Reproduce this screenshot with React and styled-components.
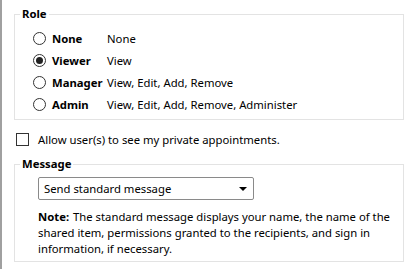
import React, { useState } from 'react';
import styled, { createGlobalStyle } from 'styled-components';

const GlobalStyle = createGlobalStyle`
  html, body {
    margin: 0;
    padding: 0;
    background: #fff;
  }
  body {
    font-family: 'Noto Sans', 'Open Sans', sans-serif;
    font-size: 11.3px;
    color: #000;
  }
`;

const Page = styled.div`
  width: 405px;
  height: 269px;
  box-sizing: border-box;
  border-left: 2px solid #a0a0a0;
  padding: 7px 1px 0 12px;
  overflow: hidden;
`;

const Group = styled.fieldset`
  margin: 0;
  border: 1px solid #e3e3e3;
  padding: 0;
  min-width: 0;
`;

const Legend = styled.legend`
  font-weight: 700;
  padding: 0 2px;
  margin-left: 5px;
  line-height: 14px;
`;

const GroupBody = styled.div`
  padding: ${(p) => p.$pad};
`;

const RoleTable = styled.div`
  display: grid;
  grid-template-columns: 74px 1fr;
  row-gap: 6px;
`;

const RoleRow = styled.label`
  display: contents;
  cursor: default;
`;

const RoleName = styled.span`
  display: flex;
  align-items: center;
  gap: 6px;
  font-weight: 700;
  height: 16px;
  white-space: nowrap;
`;

const RoleRights = styled.span`
  display: flex;
  align-items: center;
  height: 16px;
`;

const Radio = styled.span`
  width: 13px;
  height: 13px;
  box-sizing: border-box;
  border: 1px solid #333;
  border-radius: 50%;
  background: #fff;
  display: inline-flex;
  align-items: center;
  justify-content: center;
  flex: none;
  &::after {
    content: '';
    width: 7px;
    height: 7px;
    border-radius: 50%;
    background: #222;
    display: ${(p) => (p.$checked ? 'block' : 'none')};
  }
`;

const CheckRow = styled.label`
  display: flex;
  align-items: center;
  gap: 9px;
  margin: 11px 0 10px 2px;
  height: 16px;
`;

const Box = styled.span`
  width: 13px;
  height: 13px;
  box-sizing: border-box;
  border: 1px solid #333;
  background: #fff;
  flex: none;
`;

const Select = styled.div`
  width: 216px;
  height: 23px;
  box-sizing: border-box;
  border: 1px solid #8a8a8a;
  border-radius: 2px;
  display: flex;
  align-items: center;
  justify-content: space-between;
  padding: 0 6px 0 5px;
`;

const Caret = styled.span`
  width: 0;
  height: 0;
  border-left: 4px solid transparent;
  border-right: 4px solid transparent;
  border-top: 4px solid #000;
`;

const Note = styled.p`
  margin: 9px 0 0;
  line-height: 16px;
  b {
    font-weight: 700;
    margin-right: 1px;
  }
`;

const roles = [
  { name: 'None', rights: 'None' },
  { name: 'Viewer', rights: 'View' },
  { name: 'Manager', rights: 'View, Edit, Add, Remove' },
  { name: 'Admin', rights: 'View, Edit, Add, Remove, Administer' },
];

export default function App() {
  const [role, setRole] = useState('Viewer');

  return (
    <>
      <GlobalStyle />
      <Page>
        <Group>
          <Legend>Role</Legend>
          <GroupBody $pad="9px 8px 7px 18px">
            <RoleTable>
              {roles.map((r) => (
                <RoleRow key={r.name} onClick={() => setRole(r.name)}>
                  <RoleName>
                    <Radio $checked={role === r.name} />
                    {r.name}
                  </RoleName>
                  <RoleRights>{r.rights}</RoleRights>
                </RoleRow>
              ))}
            </RoleTable>
          </GroupBody>
        </Group>
        <CheckRow>
          <Box />
          Allow user(s) to see my private appointments.
        </CheckRow>
        <Group>
          <Legend>Message</Legend>
          <GroupBody $pad="6px 12px 4px 23px">
            <Select>
              Send standard message
              <Caret />
            </Select>
            <Note>
              <b>Note:</b> The standard message displays your name, the name
              of the shared item, permissions granted to the recipients, and
              sign in information, if necessary.
            </Note>
          </GroupBody>
        </Group>
      </Page>
    </>
  );
}
